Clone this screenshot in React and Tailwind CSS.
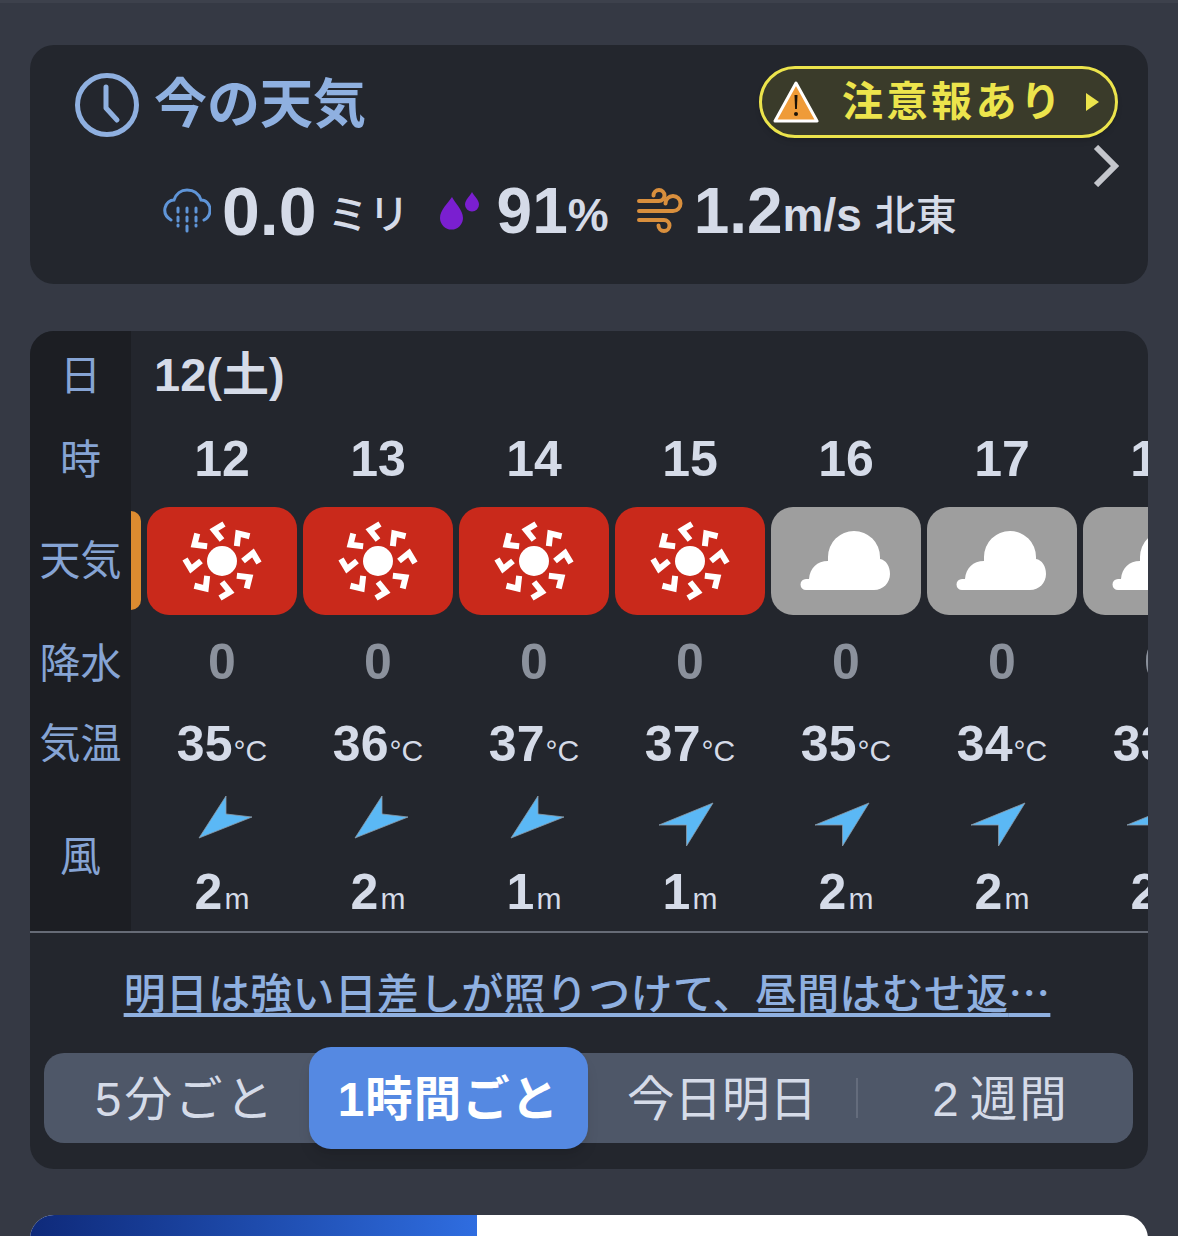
const hours = [
  { h: "12", sky: "sun", rain: "0", temp: "35", dir: "a", wind: "2" },
  { h: "13", sky: "sun", rain: "0", temp: "36", dir: "a", wind: "2" },
  { h: "14", sky: "sun", rain: "0", temp: "37", dir: "a", wind: "1" },
  { h: "15", sky: "sun", rain: "0", temp: "37", dir: "b", wind: "1" },
  { h: "16", sky: "cloud", rain: "0", temp: "35", dir: "b", wind: "2" },
  { h: "17", sky: "cloud", rain: "0", temp: "34", dir: "b", wind: "2" },
  { h: "18", sky: "cloud", rain: "0", temp: "33", dir: "b", wind: "2" },
];

function ClockIcon() {
  return (
    <svg width="64" height="64" viewBox="0 0 64 64" fill="none" stroke="#8fb0e0" strokeWidth="5" strokeLinecap="round" strokeLinejoin="round" className="shrink-0">
      <circle cx="32" cy="32" r="29.5" />
      <path d="M31 14v21l11 12" />
    </svg>
  );
}

function RainIcon() {
  return (
    <svg width="48" height="48" viewBox="0 0 48 48" fill="none" className="shrink-0">
      <path d="M8 33C3 30 1 26 2 21c1-5 5-8 9-8 2-6 7-10 13-10 7 0 12 4 14 10 5 0 9 4 9 10 0 4-2 8-6 10" stroke="#5f95d8" strokeWidth="3" strokeLinecap="round" />
      <path d="M15 21v4M24 21v4M33 21v4M15 30v4M24 30v4M33 30v4M24 39v5M15 38v1M33 38v1" stroke="#5f95d8" strokeWidth="3" strokeLinecap="round" />
    </svg>
  );
}

function DropsIcon() {
  return (
    <svg width="40" height="38" viewBox="0 0 40 38" className="shrink-0">
      <path d="M12 5c3 6 11 13 11 21a11.500 11.500 0 0 1-23 0C0 18 8 11 12 5z" fill="#7a1fd0" />
      <path d="M32 0c2 4 7 8 7 12.500a7 7 0 0 1-14 0C25 8 30 4 32 0z" fill="#7a1fd0" />
    </svg>
  );
}

function WindIcon() {
  return (
    <svg width="46" height="46" viewBox="0 0 46 46" fill="none" stroke="#d98f3d" strokeWidth="4" strokeLinecap="round" className="shrink-0">
      <path d="M2 13H22a5.500 5.500 0 1 0-5.500-5.500" />
      <path d="M2 23H36a7.500 7.500 0 1 0-7.500-7.500" />
      <path d="M2 32H27a5.500 5.500 0 1 1-5.500 5.500" />
    </svg>
  );
}

function WarningIcon() {
  return (
    <svg width="46" height="44" viewBox="0 0 46 44" className="shrink-0">
      <path d="M23 3L44 41H2z" fill="#ef9b38" stroke="#ffffff" strokeWidth="3" strokeLinejoin="round" />
      <path d="M21.500 15h3l-.6 14h-1.800z" fill="#1b1208" />
      <circle cx="23" cy="34" r="2" fill="#1b1208" />
    </svg>
  );
}

function SunIcon() {
  const angles = [0, 45, 90, 135, 180, 225, 270, 315];
  return (
    <svg width="150" height="108" viewBox="0 0 150 108">
      <circle cx="75" cy="54" r="15" fill="#ffffff" />
      {angles.map((a) => (
        <path key={a} d="M2 -37L-8 -31L0 -21" fill="none" stroke="#ffffff" strokeWidth="6" transform={`translate(75 54) rotate(${a})`} />
      ))}
    </svg>
  );
}

function CloudIcon() {
  return (
    <svg width="150" height="108" viewBox="0 0 150 108">
      <path d="M35 83a5.500 5.500 0 0 1 0-11h3c1-11 8-18 19-18v-4a26 26 0 0 1 52 0v2c6 1 10 7 10 15 0 9-7 16-16 16z" fill="#ffffff" />
    </svg>
  );
}

function WindArrow({ dir }) {
  return (
    <svg width="64" height="56" viewBox="0 0 64 56">
      {dir === "a" ? (
        <polygon points="9,43 36,1 36,19 62,22" fill="#5bb8f5" stroke="#8a9aa8" strokeWidth="0.800" />
      ) : (
        <polygon points="1,30 55,8 28.500,51 28.500,30" fill="#5bb8f5" stroke="#8a9aa8" strokeWidth="0.800" />
      )}
    </svg>
  );
}

function RowLabel({ className, children }) {
  return <div className={`flex items-center justify-center text-[41px] leading-none text-[#86a4d4] ${className}`}>{children}</div>;
}

export default function App() {
  return (
    <div className="h-[1236px] overflow-hidden bg-[#353944] border-t-[3px] border-[#3d414c] pt-[42px] px-[30px] font-['Liberation_Sans','Noto_Sans_CJK_JP',sans-serif]">
      {/* 今の天気 */}
      <div className="relative h-[239px] rounded-[24px] bg-[#23262d]">
        <div className="flex justify-between pt-[21px] pl-[45px] pr-[30px]">
          <div className="flex items-center h-[76px] gap-[15px] pt-[1px]">
            <ClockIcon />
            <span className="text-[53px] leading-none font-bold text-[#8fb0e0]">今の天気</span>
          </div>
          <div className="flex items-center h-[72px] w-[359px] rounded-full border-[3px] border-[#ece44c] bg-[#3a3b2a] pl-[11px] shadow-md">
            <WarningIcon />
            <span className="ml-[23px] text-[41px] leading-none font-bold tracking-[3.500px] text-[#ece44c]">注意報あり</span>
            <svg width="14" height="18" viewBox="0 0 14 18" className="ml-[20px]">
              <path d="M1 0l13 9-13 9z" fill="#ece44c" />
            </svg>
          </div>
        </div>
        <svg width="26" height="42" viewBox="0 0 26 42" fill="none" stroke="#c4c6cc" strokeWidth="6" className="absolute right-[29px] top-[100px]">
          <path d="M3 2l19 19L3 40" />
        </svg>
        <div className="flex items-center mt-[35px] pl-[133px] text-[#d5dbe8]">
          <RainIcon />
          <span className="ml-[11px] text-[68px] leading-none font-bold">0.0</span>
          <span className="ml-[11px] pt-[8px] text-[41px] leading-none font-medium">ミリ</span>
          <span className="ml-[30px]"><DropsIcon /></span>
          <span className="ml-[17px] text-[64px] leading-none font-bold">91</span>
          <span className="pt-[8px] text-[46px] leading-none font-bold">%</span>
          <span className="ml-[28px]"><WindIcon /></span>
          <span className="ml-[11px] text-[64px] leading-none font-bold">1.2</span>
          <span className="pt-[8px] text-[46px] leading-none font-bold">m/s</span>
          <span className="ml-[13px] pt-[10px] text-[41px] leading-none font-medium">北東</span>
        </div>
      </div>

      {/* 1時間ごとの予報 */}
      <div className="mt-[47px] h-[838px] rounded-[24px] bg-[#23262d] overflow-hidden">
        <div className="flex h-[600px]">
          <div className="w-[101px] shrink-0 bg-[#1c1e23]">
            <RowLabel className="h-[91px]">日</RowLabel>
            <RowLabel className="h-[76px]">時</RowLabel>
            <RowLabel className="h-[127px]">天気</RowLabel>
            <RowLabel className="h-[79px]">降水</RowLabel>
            <RowLabel className="h-[80px]">気温</RowLabel>
            <RowLabel className="h-[147px]">風</RowLabel>
          </div>
          <div className="relative flex-1 overflow-hidden">
            <div className="absolute left-0 top-[180px] h-[99px] w-[10px] rounded-r-[10px] bg-[#dc8b30]" />
            <div className="h-[87px] flex items-center pl-[23px] text-[47px] leading-none font-bold text-[#d5dbe8]">12(土)</div>
            <div className="flex pl-[13px] w-max">
              {hours.map((c) => (
                <div key={c.h} className="w-[156px] flex flex-col items-center">
                  <div className="h-[82px] flex items-center text-[50px] leading-none font-bold text-[#d5dbe8]">{c.h}</div>
                  <div className={`mt-[7px] h-[108px] w-[150px] rounded-[22px] ${c.sky === "sun" ? "bg-[#c9291b]" : "bg-[#9e9e9e]"}`}>
                    {c.sky === "sun" ? <SunIcon /> : <CloudIcon />}
                  </div>
                  <div className="mt-[5px] h-[83px] flex items-center text-[50px] leading-none font-bold text-[#8b919c]">{c.rain}</div>
                  <div className="h-[82px] flex items-baseline pt-[16px] text-[#d5dbe8]">
                    <span className="text-[50px] leading-none font-bold">{c.temp}</span>
                    <span className="text-[30px] leading-none ml-[1px]">°C</span>
                  </div>
                  <div className="h-[68px] pt-[10px]"><WindArrow dir={c.dir} /></div>
                  <div className="flex items-baseline h-[60px] pt-[14px] text-[#d5dbe8]">
                    <span className="text-[50px] leading-none font-bold">{c.wind}</span>
                    <span className="text-[30px] leading-none ml-[2px]">m</span>
                  </div>
                </div>
              ))}
            </div>
          </div>
        </div>
        <div className="h-[2px] bg-[#666b76]" />
        <div className="mt-[37px] h-[42px] pr-[4px] text-center text-[42px] leading-none font-medium tracking-[0.2px] text-[#8fb0e0] underline underline-offset-[4px] whitespace-nowrap">明日は強い日差しが照りつけて、昼間はむせ返<span className="font-['Noto_Sans_CJK_JP',sans-serif]">…</span></div>
        <div className="mt-[41px] ml-[14px] mr-[15px] flex h-[90px] items-center rounded-[20px] bg-[#4e5768] text-[47.500px] leading-none text-[#d5dbe8]">
          <div className="w-[265px] pl-[18px] text-center"><span className="inline-block pt-[4px] tracking-[3px]">5分ごと</span></div>
          <div className="flex h-[102px] w-[279px] items-center justify-center rounded-[22px] bg-[#5589e2] font-bold text-white shadow-lg"><span className="pt-[4px] tracking-[1px]">1時間ごと</span></div>
          <div className="w-[270px] border-r-2 border-[#646c7c] h-[40px] flex items-center justify-center"><span className="pt-[4px]">今日明日</span></div>
          <div className="flex-1 pl-[10px] text-center"><span className="inline-block pt-[4px] tracking-[2px]"><span className="mr-[9px]">2</span>週間</span></div>
        </div>
      </div>

      {/* 下のカード */}
      <div className="mt-[46px] flex h-[60px] rounded-t-[24px] overflow-hidden bg-white">
        <div className="w-[447px] bg-gradient-to-r from-[#0f2a7a] to-[#2f6de0]" />
      </div>
    </div>
  );
}
